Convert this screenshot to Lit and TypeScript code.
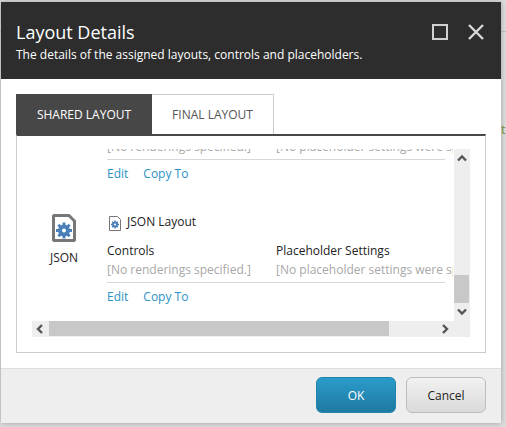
import { LitElement, html, css, svg } from "lit";
import { customElement } from "lit/decorators.js";

const gear = (cx: number, cy: number, r: number, color: string) => svg`
  <g fill="none" stroke="${color}">
    <circle cx="${cx}" cy="${cy}" r="${r * 0.5}" stroke-width="${r * 0.5}"></circle>
    ${[0, 45, 90, 135].map(
      (a) => svg`<line x1="${cx}" y1="${cy - r}" x2="${cx}" y2="${cy + r}" stroke-width="${r * 0.36}" stroke-dasharray="${r * 0.4} ${r * 1.2}" transform="rotate(${a} ${cx} ${cy})"></line>`
    )}
  </g>`;

const fileIcon = (w: number, h: number, sw: number, gr: number, dy: number, fold: number) => html`
  <svg width="${w}" height="${h}" viewBox="0 0 ${w} ${h}">
    <path d="M${sw / 2} ${sw / 2}H${w - fold}L${w - sw / 2} ${fold}V${h - sw / 2}H${sw / 2}Z" fill="#fff" stroke="#777" stroke-width="${sw}" stroke-linejoin="bevel"></path>
    ${gear(w / 2, h / 2 + dy, gr, "#4a7fba")}
  </svg>`;

@customElement("app-root")
export class AppRoot extends LitElement {
  static styles = css`
    :host {
      display: block;
      position: relative;
      width: 506px;
      height: 427px;
      overflow: hidden;
      background: #dedede;
      font-family: "Open Sans", sans-serif;
      font-size: 12px;
      color: #222;
    }
    .back-line {
      position: absolute;
      left: 0;
      right: 0;
      top: 31px;
      height: 1px;
      background: #c4c4c4;
    }
    .back-t {
      position: absolute;
      left: 501px;
      top: 120px;
      width: 5px;
      overflow: hidden;
      font-size: 13px;
      line-height: 18px;
      color: #7f9a3a;
    }
    .dialog {
      position: relative;
      margin: 2px 0 0 1px;
      width: 500px;
      height: 421px;
      display: flex;
      flex-direction: column;
      background: #fff;
      box-shadow: 0 0 6px rgba(0, 0, 0, 0.3);
    }
    .header {
      height: 77px;
      flex: none;
      box-sizing: border-box;
      background: #2d2d2d;
      color: #fff;
      padding: 18px 17px 0 15px;
      display: flex;
      justify-content: space-between;
      align-items: flex-start;
    }
    .title {
      font-size: 18px;
      line-height: 24px;
    }
    .subtitle {
      font-size: 12px;
      line-height: 18px;
      margin-top: 2px;
    }
    .win {
      display: flex;
      gap: 20px;
      margin-top: 4px;
    }
    .win svg {
      display: block;
    }
    .body {
      flex: 1;
      padding: 15px;
      display: flex;
      flex-direction: column;
    }
    .tabs {
      display: flex;
      height: 40px;
      flex: none;
    }
    .tab {
      display: flex;
      align-items: center;
      justify-content: center;
      box-sizing: border-box;
      height: 40px;
      font-size: 12px;
      color: #555;
    }
    .tab.on {
      width: 136px;
      background: #474747;
      color: #fff;
    }
    .tab.off {
      width: 122px;
      border: 1px solid #ccc;
      border-left: none;
      border-bottom: none;
    }
    .panel {
      flex: 1;
      box-sizing: border-box;
      border: 1px solid #ccc;
      border-top: 2px solid #474747;
      padding: 13px 15px 15px;
      display: grid;
      grid-template-columns: 422px 16px;
      grid-template-rows: 172px 16px;
    }
    .view {
      overflow: hidden;
      white-space: nowrap;
      width: 421px;
    }
    .rows {
      margin-top: -12px;
      display: flex;
      flex-direction: column;
      gap: 29px;
    }
    .row {
      display: flex;
    }
    .tail {
      margin-left: 75px;
    }
    .kind {
      width: 64px;
      margin-right: 11px;
      flex: none;
      display: flex;
      flex-direction: column;
      align-items: center;
      padding-top: 2px;
      line-height: 18px;
    }
    .kind svg {
      display: block;
      margin-bottom: 7px;
    }
    .main {
      width: 338px;
      flex: none;
      line-height: 18px;
    }
    .name {
      display: flex;
      align-items: center;
      gap: 6px;
      margin: 1px 0 11px 2px;
      height: 18px;
    }
    .name svg {
      display: block;
      margin-top: 2px;
    }
    .cols {
      display: grid;
      grid-template-columns: 169px 169px;
      padding-bottom: 3px;
      border-bottom: 1px solid #d8d8d8;
    }
    .empty {
      color: #a8a8a8;
      margin-top: 1px;
    }
    .links {
      display: flex;
      gap: 15px;
      margin-top: 5px;
      color: #2a92c4;
    }
    .sb {
      background: #eee;
      display: flex;
    }
    .sb.v {
      flex-direction: column;
      justify-content: space-between;
    }
    .sb svg {
      display: block;
      flex: none;
    }
    .v-track {
      flex: 1;
      display: flex;
      flex-direction: column;
      justify-content: flex-end;
    }
    .v-thumb {
      height: 28px;
      width: 15px;
      background: #c8c8c8;
    }
    .h-thumb {
      width: 340px;
      height: 15px;
      background: #c8c8c8;
    }
    .h-track {
      flex: 1;
    }
    .footer {
      height: 55px;
      flex: none;
      box-sizing: border-box;
      background: #eee;
      border-top: 1px solid #ddd;
      padding: 8px 15px 0 0;
      display: flex;
      justify-content: flex-end;
      gap: 10px;
    }
    .btn {
      width: 80px;
      height: 36px;
      box-sizing: border-box;
      border-radius: 6px;
      display: flex;
      align-items: center;
      justify-content: center;
      font-size: 12px;
    }
    .btn.ok {
      color: #fff;
      background: linear-gradient(#2b9bcb, #1e7aa1);
      border: 1px solid #2284ad;
    }
    .btn.cancel {
      color: #222;
      background: linear-gradient(#f1f1f1, #dadada);
      border: 1px solid #bdbdbd;
    }
  `;

  private links() {
    return html`<div class="links"><span>Edit</span><span>Copy To</span></div>`;
  }

  render() {
    return html`
      <div class="back-line"></div>
      <div class="back-t">t</div>
      <div class="dialog">
        <div class="header">
          <div>
            <div class="title">Layout Details</div>
            <div class="subtitle">The details of the assigned layouts, controls and placeholders.</div>
          </div>
          <div class="win">
            <svg width="16" height="16" viewBox="0 0 16 16"><rect x="1" y="1" width="14" height="14" fill="none" stroke="#d0d0d0" stroke-width="2"></rect></svg>
            <svg width="16" height="16" viewBox="0 0 16 16"><path d="M1 1L15 15M15 1L1 15" fill="none" stroke="#d8d8d8" stroke-width="2.4"></path></svg>
          </div>
        </div>
        <div class="body">
          <div class="tabs">
            <div class="tab on">SHARED LAYOUT</div>
            <div class="tab off">FINAL LAYOUT</div>
          </div>
          <div class="panel">
            <div class="view">
              <div class="rows">
                <div class="row tail">
                  <div class="main">
                    <div class="cols">
                      <div class="empty">[No renderings specified.]</div>
                      <div class="empty">[No placeholder settings were specified.]</div>
                    </div>
                    ${this.links()}
                  </div>
                </div>
                <div class="row">
                  <div class="kind">${fileIcon(24, 28, 3, 8, 2.5, 7)}<span>JSON</span></div>
                  <div class="main">
                    <div class="name">${fileIcon(12, 15, 1, 4, 1, 3.5)}<span>JSON Layout</span></div>
                    <div class="cols">
                      <div>Controls</div>
                      <div>Placeholder Settings</div>
                      <div class="empty">[No renderings specified.]</div>
                      <div class="empty">[No placeholder settings were specified.]</div>
                    </div>
                    ${this.links()}
                  </div>
                </div>
              </div>
            </div>
            <div class="sb v">
              <svg width="16" height="18" viewBox="0 0 16 18"><path d="M4 11.5L8 7.5L12 11.5" fill="none" stroke="#555" stroke-width="2.4"></path></svg>
              <div class="v-track"><div class="v-thumb"></div></div>
              <svg width="16" height="18" viewBox="0 0 16 18"><path d="M4 6.5L8 10.5L12 6.5" fill="none" stroke="#555" stroke-width="2.4"></path></svg>
            </div>
            <div class="sb h">
              <svg width="17" height="16" viewBox="0 0 17 16"><path d="M10 4L6 8L10 12" fill="none" stroke="#555" stroke-width="2.4"></path></svg>
              <div class="h-thumb"></div>
              <div class="h-track"></div>
              <svg width="17" height="16" viewBox="0 0 17 16"><path d="M6 4L10 8L6 12" fill="none" stroke="#555" stroke-width="2.4"></path></svg>
            </div>
            <div class="sb"></div>
          </div>
        </div>
        <div class="footer">
          <div class="btn ok">OK</div>
          <div class="btn cancel">Cancel</div>
        </div>
      </div>
    `;
  }
}
